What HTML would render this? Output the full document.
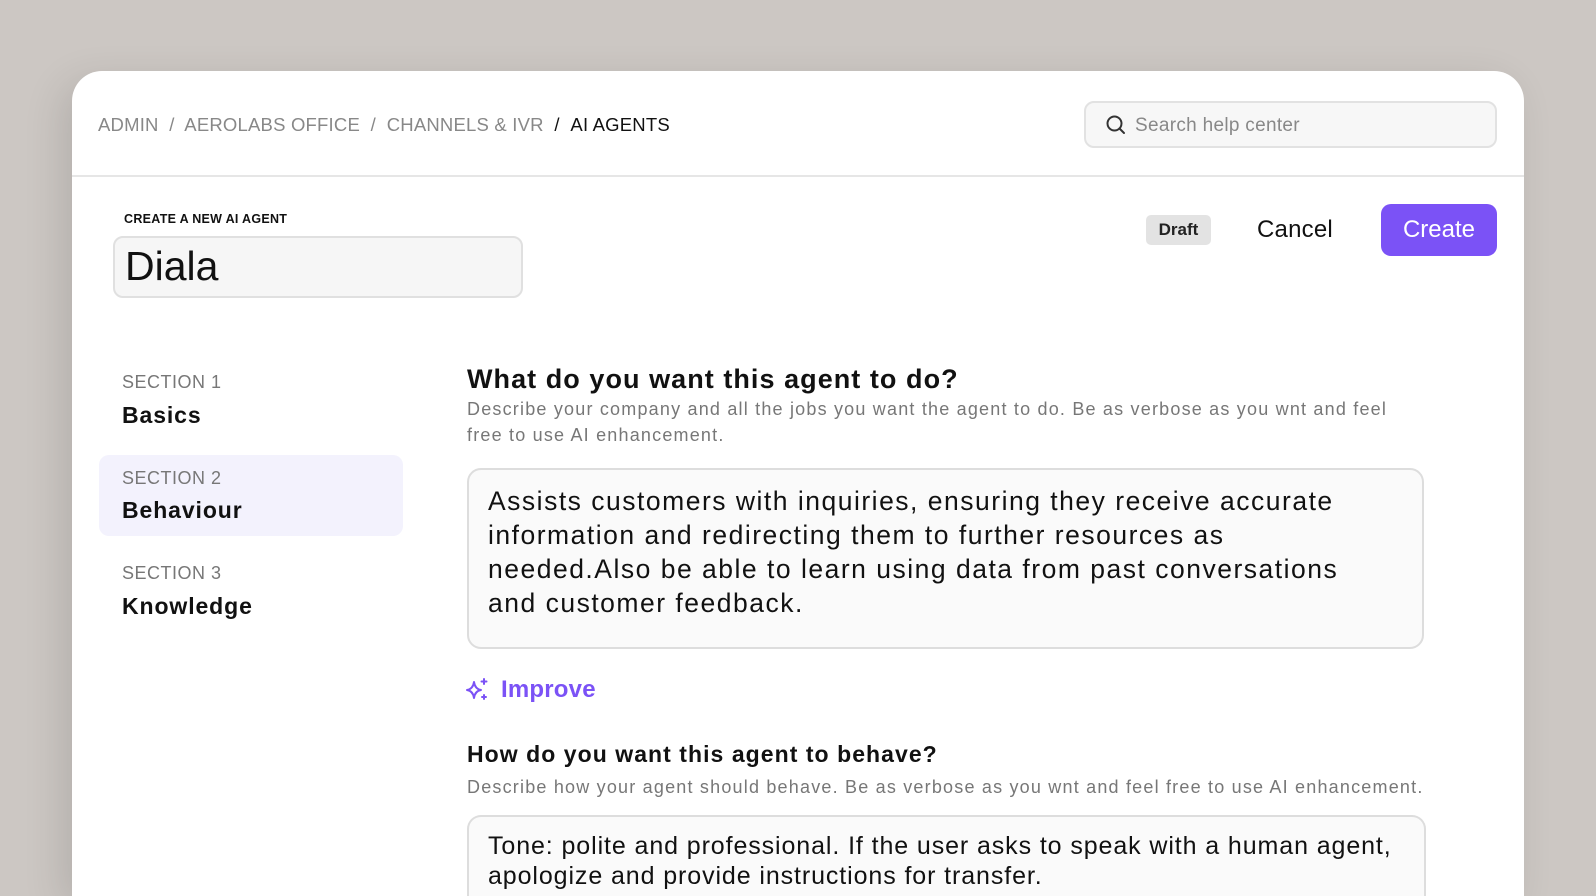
<!DOCTYPE html>
<html><head><meta charset="utf-8"><style>
*{margin:0;padding:0;box-sizing:border-box}
html,body{width:1596px;height:896px;overflow:hidden}
body{background:#ccc7c3;font-family:"Liberation Sans",sans-serif;position:relative}
#w{position:absolute;left:0;top:0;width:1596px;height:896px;overflow:hidden}
.card{position:absolute;left:72px;top:71px;width:1452px;height:825px;background:#fff;border-radius:30px 30px 0 0;box-shadow:-10px 10px 40px rgba(0,0,0,.12)}
.a{position:absolute;white-space:nowrap}
.bc{left:98px;top:114px;font-size:18.5px;color:#888;letter-spacing:.2px}
.bc b{font-weight:normal;color:#111}
.hr{left:72px;top:175px;width:1452px;height:2px;background:#e6e6e6}
.search{left:1084px;top:101px;width:413px;height:47px;border:2px solid #e2e2e2;border-radius:10px;background:#f7f7f7}
.search span{position:absolute;left:49px;top:12px;font-size:19px;color:#888;letter-spacing:.3px}
.lbl{left:124px;top:212px;font-size:12.5px;font-weight:bold;color:#111;letter-spacing:.3px}
.name{left:113px;top:236px;width:410px;height:62px;border:2px solid #e0e0e0;border-radius:10px;background:#f6f6f6;font-size:41px;padding:5px 0 0 10px;color:#111}
.draft{left:1146px;top:215px;width:65px;height:30px;background:#e3e3e3;border-radius:5px;font-size:17px;font-weight:bold;text-align:center;line-height:30px;color:#222}
.cancel{left:1257px;top:216px;font-size:24px;color:#111;letter-spacing:.2px}
.create{left:1381px;top:204px;width:116px;height:52px;background:#7b52f6;border-radius:10px;color:#fff;font-size:24px;text-align:center;line-height:52px}
.sec{font-size:18px;color:#777;left:122px;letter-spacing:.5px}
.st{font-size:23px;font-weight:bold;color:#111;left:122px;letter-spacing:.9px}
.hl{left:99px;top:455px;width:304px;height:81px;background:#f3f2fd;border-radius:10px}
.h1{left:467px;top:364px;font-size:27px;font-weight:bold;color:#111;letter-spacing:1.05px}
.d{font-size:18px;color:#777;left:467px;line-height:25.5px;letter-spacing:1.2px}
.ta{left:467px;top:468px;width:957px;height:181px;border:2px solid #ddd;border-radius:14px;background:#fafafa;padding:14px 19px;font-size:26.5px;line-height:34px;color:#111;letter-spacing:1.5px}
.imp{left:501px;top:676px;font-size:24px;font-weight:bold;color:#7b52f6;letter-spacing:.2px}
.h2{left:467px;top:741px;font-size:23px;font-weight:bold;color:#111;letter-spacing:1.05px}
.ta2{left:467px;top:815px;width:959px;height:81px;border:2px solid #ddd;border-bottom:none;border-radius:14px 14px 0 0;background:#fafafa;padding:14px 19px;font-size:25px;line-height:30px;color:#111;letter-spacing:.9px}
</style></head><body><div id="w">
<div class="card"></div>
<div class="a bc">ADMIN &nbsp;/&nbsp; AEROLABS OFFICE &nbsp;/&nbsp; CHANNELS &amp; IVR &nbsp;<b>/ &nbsp;AI AGENTS</b></div>
<div class="a hr"></div>
<div class="a search"><svg style="position:absolute;left:19px;top:11px" width="22" height="22" viewBox="0 0 22 22" fill="none" stroke="#333" stroke-width="2"><circle cx="9.5" cy="9.5" r="7"/><path d="M14.5 14.5L19 19" stroke-linecap="round"/></svg><span>Search help center</span></div>
<div class="a lbl">CREATE A NEW AI AGENT</div>
<div class="a name">Diala</div>
<div class="a draft">Draft</div>
<div class="a cancel">Cancel</div>
<div class="a create">Create</div>
<div class="a sec" style="top:372px">SECTION 1</div>
<div class="a st" style="top:402px">Basics</div>
<div class="a hl"></div>
<div class="a sec" style="top:468px">SECTION 2</div>
<div class="a st" style="top:497px">Behaviour</div>
<div class="a sec" style="top:563px">SECTION 3</div>
<div class="a st" style="top:593px">Knowledge</div>
<div class="a h1">What do you want this agent to do?</div>
<div class="a d" style="top:397px">Describe your company and all the jobs you want the agent to do. Be as verbose as you wnt and feel<br>free to use AI enhancement.</div>
<div class="a ta">Assists customers with inquiries, ensuring they receive accurate<br>information and redirecting them to further resources as<br>needed.Also be able to learn using data from past conversations<br>and customer feedback.</div>
<svg class="a" style="left:465px;top:677px" width="26" height="26" viewBox="0 0 26 26" fill="none" stroke="#7b52f6" stroke-width="2" stroke-linejoin="round"><path d="M9 5 Q10 12 16 13 Q10 14 9 21 Q8 14 2 13 Q8 12 9 5Z"/><path d="M19 2v5M16.5 4.5h5M19 18v4M17 20h4" stroke-linecap="round"/></svg>
<div class="a imp">Improve</div>
<div class="a h2">How do you want this agent to behave?</div>
<div class="a d" style="top:775px;letter-spacing:1.2px">Describe how your agent should behave. Be as verbose as you wnt and feel free to use AI enhancement.</div>
<div class="a ta2">Tone: polite and professional. If the user asks to speak with a human agent,<br>apologize and provide instructions for transfer.</div>
</div></body></html>
